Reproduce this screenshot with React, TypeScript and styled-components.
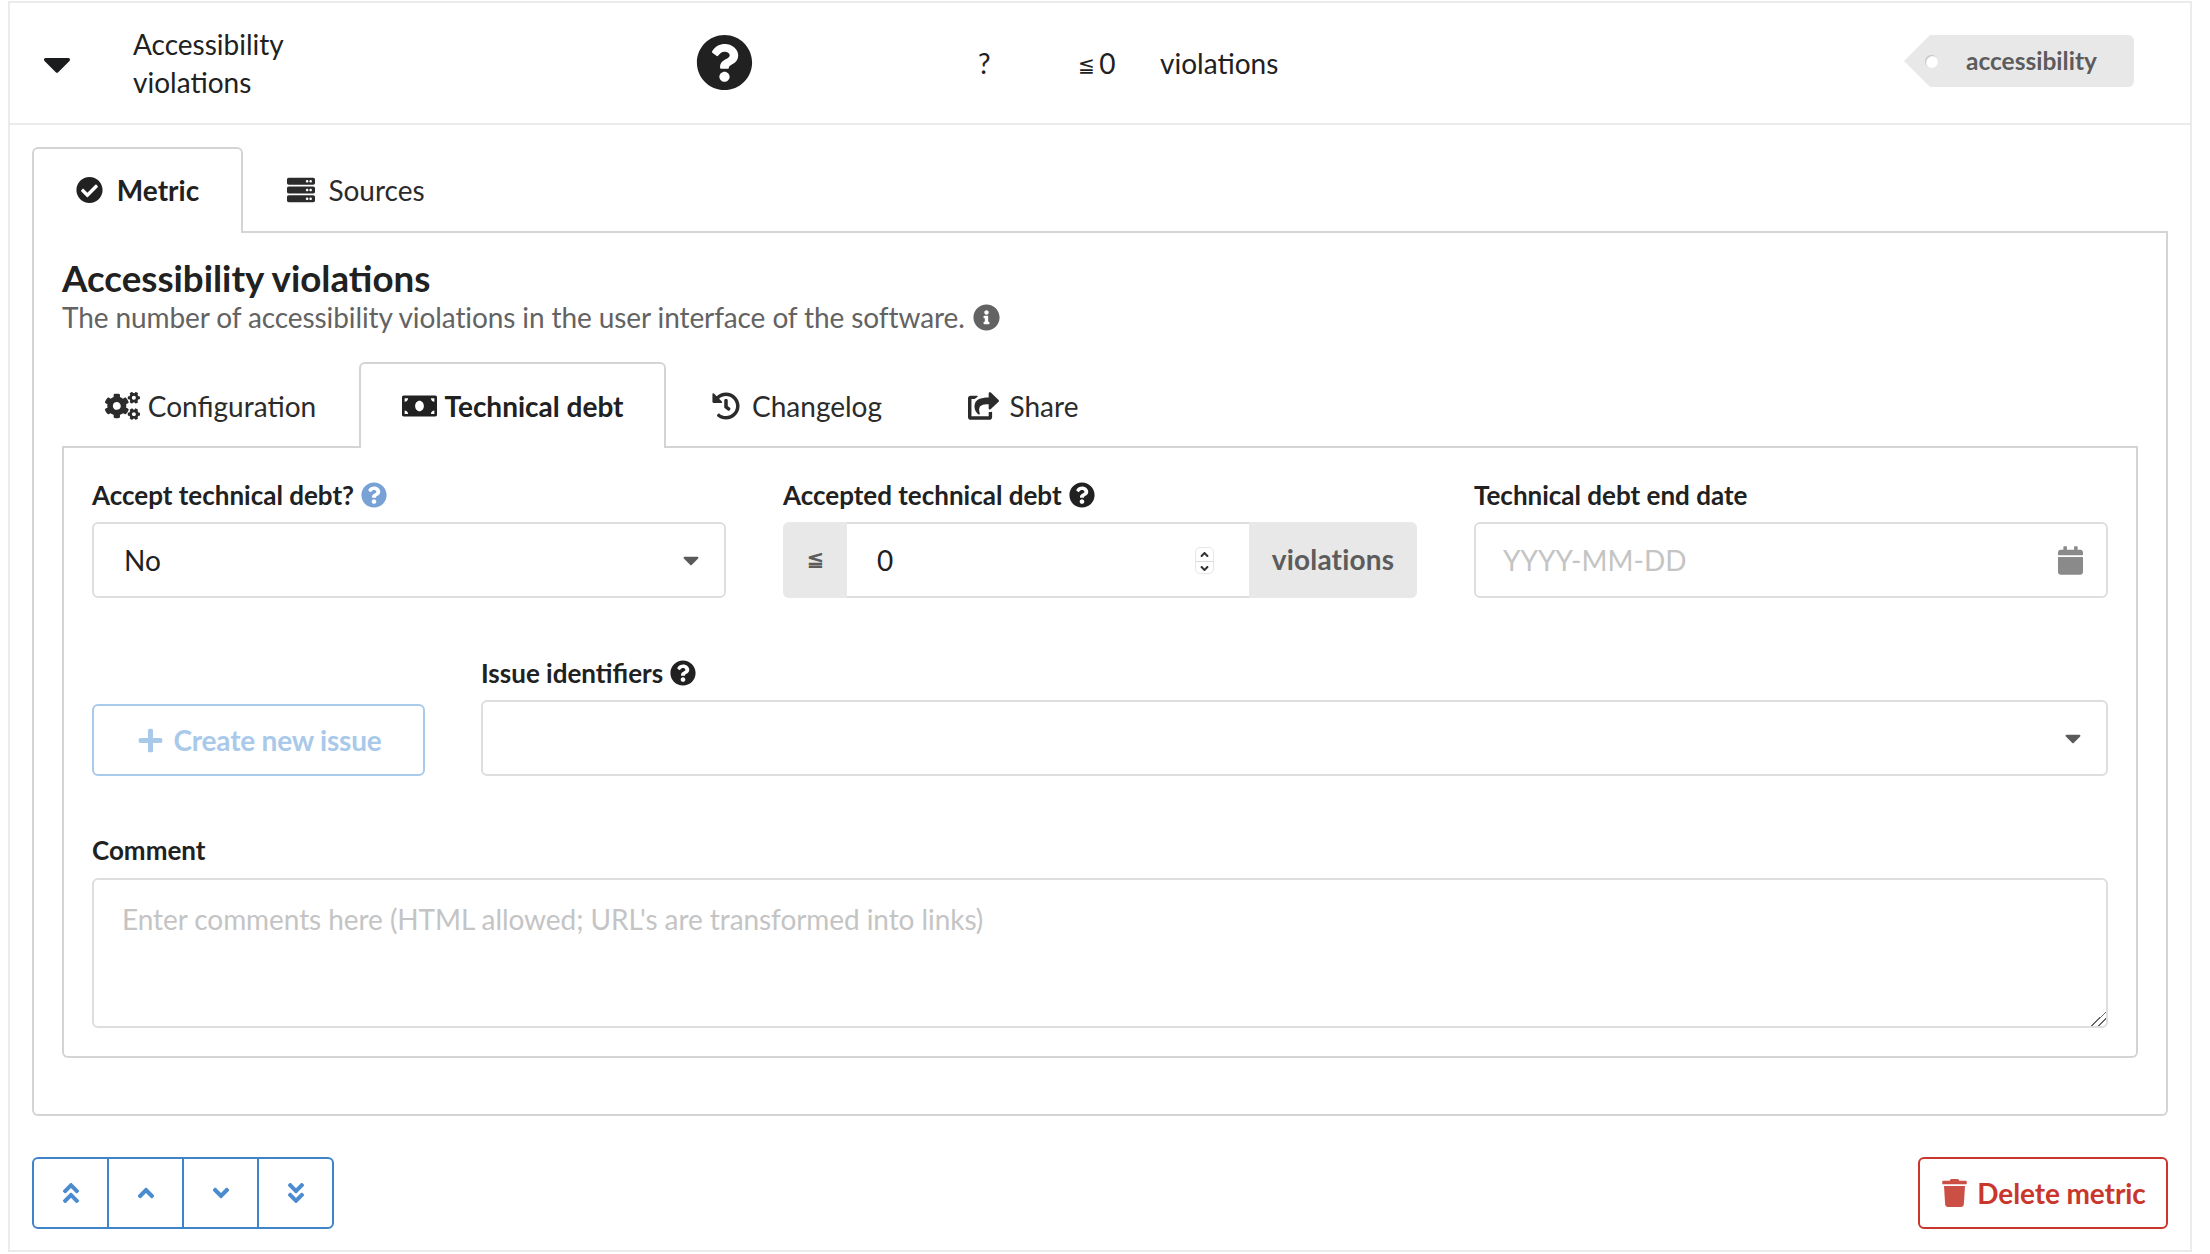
import { createGlobalStyle, styled } from "styled-components";
import {
  FaAngleDoubleDown,
  FaAngleDoubleUp,
  FaAngleDown,
  FaAngleUp,
  FaCalendar,
  FaCaretDown,
  FaCheckCircle,
  FaCogs,
  FaHistory,
  FaInfoCircle,
  FaMoneyBill,
  FaPlus,
  FaQuestionCircle,
  FaServer,
  FaShareSquare,
  FaTrash,
} from "react-icons/fa";

const GlobalStyle = createGlobalStyle`
  html, body {
    margin: 0;
    padding: 0;
    background: #fff;
  }
  body {
    font-family: Lato, "Helvetica Neue", Arial, sans-serif;
    font-size: 28px;
    color: #212121;
  }
  * {
    box-sizing: border-box;
  }
`;

const MetricRow = styled.div`
  width: 2184px;
  height: 1251px;
  margin: 1px 0 0 8px;
  border: 2px solid #ebebeb;
  display: flex;
  flex-direction: column;
`;

const Summary = styled.div`
  height: 122px;
  flex: none;
  border-bottom: 2px solid #ebebeb;
  display: flex;
  align-items: center;
`;

const Expand = styled.div`
  width: 123px;
  padding-left: 33px;
  font-size: 0;
  svg {
    width: 28px;
    height: 45px;
    color: #1b1c1d;
    display: block;
  }
`;

const MetricName = styled.div`
  width: 563px;
  line-height: 38px;
`;

const StatusCell = styled.div`
  width: 282px;
  svg {
    display: block;
    width: 57px;
    height: 57px;
    margin-top: -2px;
    color: #212121;
  }
`;

const Cell = styled.div<{ $w: number }>`
  width: ${(p) => p.$w}px;
`;

const SmallSign = styled.span`
  font-size: 20px;
  margin-right: -3px;
  vertical-align: 2px;
`;

const TagCol = styled.div`
  margin-left: auto;
  margin-right: 56px;
  margin-top: -4px;
`;

const Tag = styled.div`
  height: 52px;
  width: 230px;
  background: #e8e8e8;
  color: #5c5c5c;
  font-weight: 700;
  font-size: 24.5px;
  display: flex;
  align-items: center;
  padding: 0 0 2px 62px;
  border-radius: 0 6px 6px 0;
  clip-path: polygon(26px 0, 100% 0, 100% 100%, 26px 100%, 0 50%);
  position: relative;
  &::before {
    content: "";
    position: absolute;
    left: 21px;
    top: 20px;
    width: 13px;
    height: 13px;
    border-radius: 50%;
    background: #fff;
    box-shadow: inset 1px 1px 1px rgba(0, 0, 0, 0.25);
  }
`;

const Details = styled.div`
  flex: 1;
  padding: 22px 22px 0;
  display: flex;
  flex-direction: column;
`;

const TabBar = styled.div`
  display: flex;
  height: 86px;
  flex: none;
  border-bottom: 2px solid #d4d4d5;
`;

const Tab = styled.div<{ $active?: boolean; $w: number; $iconW?: number; $gap?: number; $lift?: boolean }>`
  width: ${(p) => p.$w}px;
  height: 86px;
  flex: none;
  display: flex;
  align-items: center;
  justify-content: center;
  gap: ${(p) => p.$gap ?? 12}px;
  padding-bottom: ${(p) => (p.$lift ? "2px" : "0")};
  font-weight: ${(p) => (p.$active ? 700 : 400)};
  color: ${(p) => (p.$active ? "#212121" : "#2b2b2b")};
  background: ${(p) => (p.$active ? "#fff" : "transparent")};
  border: 2px solid ${(p) => (p.$active ? "#d4d4d5" : "transparent")};
  border-bottom: none;
  border-radius: 6px 6px 0 0;
  svg {
    flex: none;
    height: 28px;
    width: ${(p) => p.$iconW ?? 28}px;
  }
`;

const Segment = styled.div`
  border: 2px solid #d4d4d5;
  border-top: none;
  border-radius: 0 0 6px 6px;
`;

const OuterBody = styled(Segment)`
  padding: 26px 28px 56px;
`;

const Title = styled.div`
  font-size: 36.7px;
  font-weight: 700;
  line-height: 39px;
`;

const Description = styled.div`
  color: #636363;
  line-height: 38px;
  letter-spacing: -0.1px;
  display: flex;
  align-items: center;
  gap: 8px;
  svg {
    width: 27px;
    height: 27px;
    color: #636363;
  }
`;

const InnerTabs = styled.div`
  margin-top: 26px;
`;

const InnerBody = styled(Segment)`
  padding: 30px 28px 28px;
  display: flex;
  flex-direction: column;
`;

const FormRow = styled.div<{ $cols: string; $gap: number; $mb: number }>`
  display: grid;
  grid-template-columns: ${(p) => p.$cols};
  column-gap: ${(p) => p.$gap}px;
  margin-bottom: ${(p) => p.$mb}px;
  align-items: end;
`;

const Field = styled.div`
  display: flex;
  flex-direction: column;
  min-width: 0;
`;

const Label = styled.label`
  font-size: 26px;
  font-weight: 700;
  line-height: 34px;
  margin-bottom: 10px;
  display: flex;
  align-items: center;
  gap: 7px;
  svg {
    width: 26px;
    height: 26px;
  }
`;

const HelpIcon = styled(FaQuestionCircle)<{ $blue?: boolean }>`
  color: ${(p) => (p.$blue ? "#78a2d6" : "#212121")};
`;

const Box = styled.div`
  height: 76px;
  border: 2px solid #dededf;
  border-radius: 6px;
  display: flex;
  align-items: center;
  justify-content: space-between;
  padding: 0 25px 0 30px;
  background: #fff;
  svg {
    color: #5a5a5a;
    width: 16px;
    height: 26px;
  }
`;

const TextInput = styled.input`
  border: none;
  outline: none;
  background: transparent;
  font: inherit;
  color: #212121;
  flex: 1;
  min-width: 0;
  padding: 0;
  &::placeholder {
    color: #c4c4c4;
    opacity: 1;
  }
`;

const DateBox = styled(Box)`
  padding: 0 23px 0 27px;
  svg {
    color: #8a8a8a;
    width: 25px;
    height: 29px;
  }
`;

const InputGroup = styled.div`
  display: flex;
  height: 76px;
`;

const Addon = styled.div<{ $side: "left" | "right" }>`
  background: #e8e8e8;
  color: #5c5c5c;
  flex: none;
  display: flex;
  align-items: center;
  justify-content: center;
  font-weight: 700;
  width: ${(p) => (p.$side === "left" ? "64px" : "168px")};
  font-size: ${(p) => (p.$side === "left" ? "20px" : "28px")};
  letter-spacing: ${(p) => (p.$side === "left" ? "0" : "0.2px")};
  border-radius: ${(p) => (p.$side === "left" ? "6px 0 0 6px" : "0 6px 6px 0")};
  padding-bottom: 3px;
`;

const NumberBox = styled.div`
  flex: 1;
  min-width: 0;
  border: solid #dededf;
  border-width: 2px 0;
  display: flex;
  align-items: center;
  padding: 0 35px 0 30px;
`;

const Spinner = styled.div`
  width: 19px;
  height: 27px;
  flex: none;
  border: 1px solid #e6e6e6;
  border-radius: 5px;
  display: flex;
  flex-direction: column;
  align-items: center;
  overflow: hidden;
`;

const SpinPart = styled.div`
  flex: 1;
  width: 100%;
  display: flex;
  align-items: center;
  justify-content: center;
  & + & {
    border-top: 1px solid #dcdcdc;
  }
  svg {
    width: 13px;
    height: 13px;
    color: #333;
  }
`;

const CreateButton = styled.button`
  height: 72px;
  background: #fff;
  border: 2px solid #a9cbea;
  border-radius: 6px;
  color: #a9c9ea;
  font: inherit;
  font-weight: 700;
  letter-spacing: -0.2px;
  display: flex;
  align-items: center;
  justify-content: center;
  gap: 9px;
  padding: 0 0 0 2px;
  svg {
    width: 27px;
    height: 27px;
  }
`;

const CommentBox = styled.textarea`
  height: 150px;
  width: 100%;
  display: block;
  margin-top: 1px;
  border: 2px solid #dededf;
  border-radius: 6px;
  padding: 20px 28px;
  font: inherit;
  letter-spacing: -0.07px;
  line-height: 38px;
  color: #212121;
  outline: none;
  resize: vertical;
  &::placeholder {
    color: #c4c4c4;
    opacity: 1;
  }
  &::-webkit-resizer {
    background: linear-gradient(
      135deg,
      transparent 50%,
      #666 50%,
      #666 56%,
      transparent 56%,
      transparent 72%,
      #666 72%,
      #666 78%,
      transparent 78%
    );
  }
`;

const Actions = styled.div`
  display: flex;
  justify-content: space-between;
  margin-top: 41px;
`;

const MoveGroup = styled.div`
  display: flex;
  width: 302px;
  height: 72px;
  border: 2px solid #3f83c9;
  border-radius: 6px;
`;

const MoveButton = styled.div`
  flex: 1;
  display: flex;
  align-items: center;
  justify-content: center;
  color: #4c8bd0;
  & + & {
    border-left: 2px solid #3f83c9;
  }
  svg {
    width: 26px;
    height: 26px;
  }
`;

const DeleteButton = styled.button`
  width: 250px;
  height: 72px;
  border: 2px solid #c9372c;
  border-radius: 6px;
  background: #fff;
  color: #c9372c;
  font: inherit;
  font-weight: 700;
  letter-spacing: -0.1px;
  display: flex;
  align-items: center;
  justify-content: center;
  gap: 10px;
  padding: 0 0 0 2px;
  svg {
    width: 25px;
    height: 28px;
    color: #cc4f45;
  }
`;

export default function App() {
  return (
    <>
      <GlobalStyle />
      <MetricRow>
        <Summary>
          <Expand>
            <FaCaretDown />
          </Expand>
          <MetricName>
            Accessibility
            <br />
            violations
          </MetricName>
          <StatusCell>
            <FaQuestionCircle />
          </StatusCell>
          <Cell $w={100}>?</Cell>
          <Cell $w={82}>
            <SmallSign>≦</SmallSign> 0
          </Cell>
          <Cell $w={200}>violations</Cell>
          <TagCol>
            <Tag>accessibility</Tag>
          </TagCol>
        </Summary>
        <Details>
          <TabBar>
            <Tab $active $lift $w={211} $iconW={27} $gap={14}>
              <FaCheckCircle />
              Metric
            </Tab>
            <Tab $lift $w={226} $gap={13}>
              <FaServer />
              Sources
            </Tab>
          </TabBar>
          <OuterBody>
            <Title>Accessibility violations</Title>
            <Description>
              The number of accessibility violations in the user interface of the software.
              <FaInfoCircle />
            </Description>
            <InnerTabs>
              <TabBar>
                <Tab $w={297} $iconW={35} $gap={8}>
                  <FaCogs />
                  Configuration
                </Tab>
                <Tab $active $w={307} $iconW={35} $gap={8}>
                  <FaMoneyBill />
                  Technical debt
                </Tab>
                <Tab $w={262}>
                  <FaHistory />
                  Changelog
                </Tab>
                <Tab $w={190} $iconW={31} $gap={11}>
                  <FaShareSquare />
                  Share
                </Tab>
              </TabBar>
              <InnerBody>
                <FormRow $cols="repeat(3, minmax(0, 1fr))" $gap={57} $mb={58}>
                  <Field>
                    <Label>
                      Accept technical debt? <HelpIcon $blue />
                    </Label>
                    <Box>
                      No
                      <FaCaretDown />
                    </Box>
                  </Field>
                  <Field>
                    <Label>
                      Accepted technical debt <HelpIcon />
                    </Label>
                    <InputGroup>
                      <Addon $side="left">≦</Addon>
                      <NumberBox>
                        <TextInput defaultValue="0" readOnly />
                        <Spinner>
                          <SpinPart>
                            <FaAngleUp />
                          </SpinPart>
                          <SpinPart>
                            <FaAngleDown />
                          </SpinPart>
                        </Spinner>
                      </NumberBox>
                      <Addon $side="right">violations</Addon>
                    </InputGroup>
                  </Field>
                  <Field>
                    <Label>Technical debt end date</Label>
                    <DateBox>
                      <TextInput placeholder="YYYY-MM-DD" readOnly />
                      <FaCalendar />
                    </DateBox>
                  </Field>
                </FormRow>
                <FormRow $cols="333px minmax(0, 1fr)" $gap={56} $mb={57}>
                  <CreateButton>
                    <FaPlus />
                    Create new issue
                  </CreateButton>
                  <Field>
                    <Label>
                      Issue identifiers <HelpIcon />
                    </Label>
                    <Box>
                      <span />
                      <FaCaretDown />
                    </Box>
                  </Field>
                </FormRow>
                <Field>
                  <Label>Comment</Label>
                  <CommentBox placeholder="Enter comments here (HTML allowed; URL's are transformed into links)" readOnly />
                </Field>
              </InnerBody>
            </InnerTabs>
          </OuterBody>
          <Actions>
            <MoveGroup>
              <MoveButton>
                <FaAngleDoubleUp />
              </MoveButton>
              <MoveButton>
                <FaAngleUp />
              </MoveButton>
              <MoveButton>
                <FaAngleDown />
              </MoveButton>
              <MoveButton>
                <FaAngleDoubleDown />
              </MoveButton>
            </MoveGroup>
            <DeleteButton>
              <FaTrash />
              Delete metric
            </DeleteButton>
          </Actions>
        </Details>
      </MetricRow>
    </>
  );
}
